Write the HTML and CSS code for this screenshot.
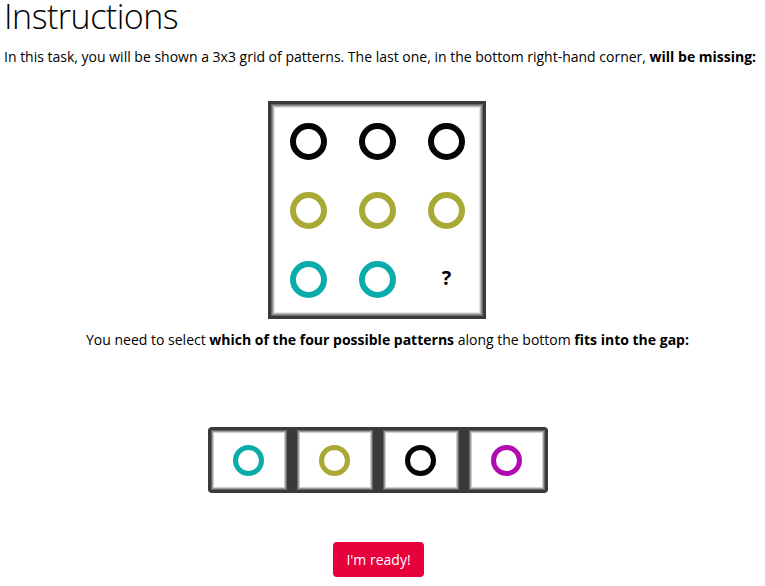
FILE: index.html
```html
<!DOCTYPE html>
<html>
<head>
<meta charset="utf-8">
<link rel="stylesheet" href="styles.css">
</head>
<body>
<h1 class="title">Instructions</h1>
<p class="intro">In this task, you will be shown a 3x3 grid of patterns. The last one, in the bottom right-hand corner, <b>will be missing:</b></p>
<div class="figure">
  <div class="matrix">
    <span class="ring black"></span><span class="ring black"></span><span class="ring black"></span>
    <span class="ring olive"></span><span class="ring olive"></span><span class="ring olive"></span>
    <span class="ring teal"></span><span class="ring teal"></span><span class="qmark">?</span>
  </div>
</div>
<p class="select">You need to select <b>which of the four possible patterns</b> along the bottom <b>fits into the gap:</b></p>
<div class="figure">
  <div class="options">
    <div class="cell"><span class="ring small teal"></span></div>
    <div class="cell"><span class="ring small olive"></span></div>
    <div class="cell"><span class="ring small black"></span></div>
    <div class="cell"><span class="ring small magenta"></span></div>
  </div>
</div>
<div class="figure">
  <button class="ready">I'm ready!</button>
</div>
</body>
</html>
```
FILE: styles.css
```css
html, body {
  margin: 0;
  padding: 0;
  background: #fff;
}
body {
  font-family: "Open Sans", "Liberation Sans", sans-serif;
  color: #000;
  padding: 0 4px;
  font-size: 14px;
}
.title {
  font-weight: 300;
  font-size: 34px;
  line-height: 38px;
  margin: -3px 0 0;
  letter-spacing: -0.5px;
}
.intro {
  margin: 0;
  margin-top: 12px;
  line-height: 20px;
}
.figure {
  display: flex;
  justify-content: center;
}
.matrix {
  margin-top: 34px;
  margin-left: -11px;
  width: 218px;
  height: 218px;
  box-sizing: border-box;
  border: 3px solid #3a3a3a;
  box-shadow: inset 0 0 0 1px #6a6a6a, inset 0 0 0 2px #8e8e8e, inset 0 0 0 3px #b8b8b8, inset 0 0 0 4px #e6e6e6;
  background: #fff;
  display: grid;
  grid-template-columns: repeat(3, 69px);
  grid-template-rows: repeat(3, 69px);
  padding: 3px 0 0 3px;
  align-items: center;
  justify-items: center;
}
.ring {
  display: block;
  box-sizing: border-box;
  width: 37px;
  height: 37px;
  border-radius: 50%;
  border: 6px solid #000;
}
.ring.black { border-color: #050505; }
.ring.olive { border-color: #a9a935; }
.ring.teal { border-color: #0aabab; }
.ring.magenta { border-color: #b00bb0; }
.qmark {
  font-weight: 700;
  font-size: 20px;
  line-height: 20px;
  margin-top: -4px;
}
.select {
  text-align: center;
  margin: 0;
  margin-top: 11px;
  padding-left: 10px;
  line-height: 20px;
}
.options {
  margin-top: 77px;
  margin-left: -10px;
  display: flex;
  gap: 10px;
  background: #3a3a3a;
  border-radius: 4px;
  padding: 3px 3px;
  height: 66px;
  box-sizing: border-box;
}
.cell {
  width: 76px;
  height: 60px;
  background: #fff;
  box-shadow: inset 0 0 0 1px #6a6a6a, inset 0 0 0 2px #9a9a9a, inset 0 0 0 3px #d0d0d0;
  display: flex;
  align-items: center;
  justify-content: center;
}
.ring.small {
  width: 31px;
  height: 31px;
  border-width: 5px;
}
.ready {
  margin-top: 49px;
  margin-left: -8px;
  font-family: "Open Sans", "Liberation Sans", sans-serif;
  font-size: 14px;
  color: #fff;
  background: #e8003d;
  border: none;
  border-radius: 4px;
  width: 91px;
  height: 35px;
  padding: 0;
}
```
